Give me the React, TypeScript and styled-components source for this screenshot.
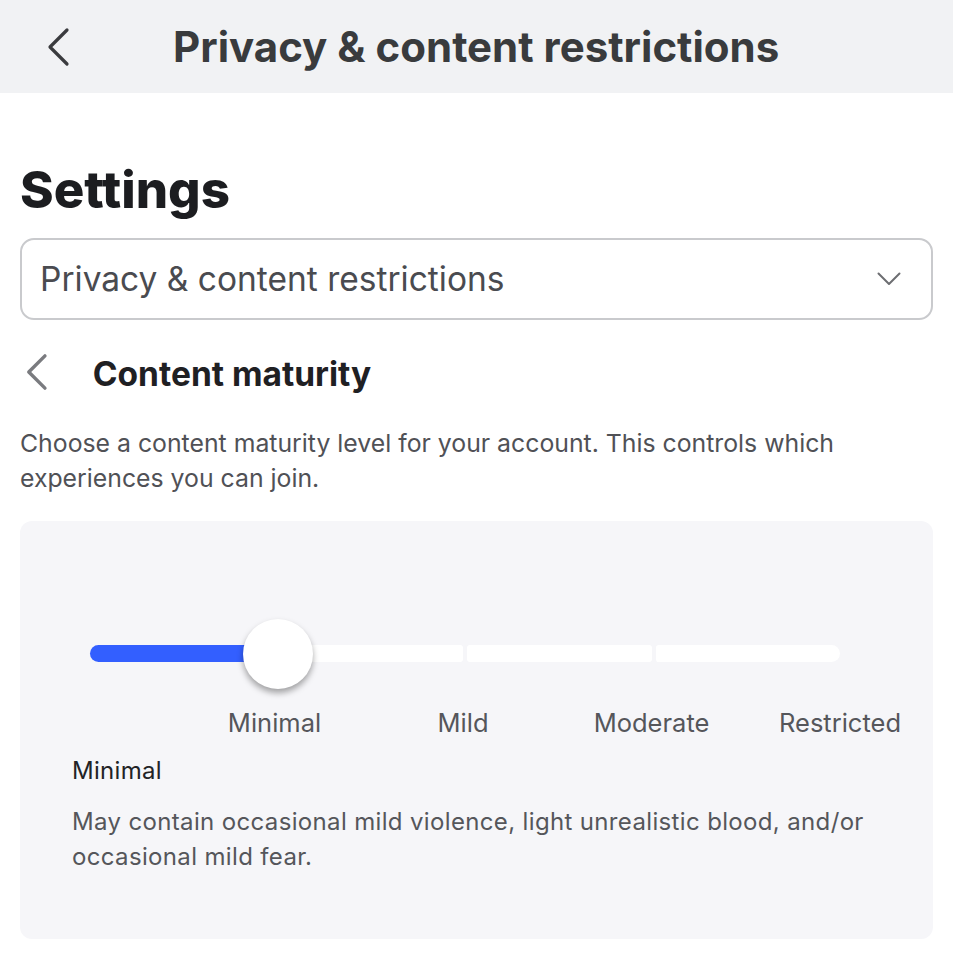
import React from 'react';
import styled, { createGlobalStyle } from 'styled-components';

const Global = createGlobalStyle`
  body {
    margin: 0;
    background: #ffffff;
    font-family: Inter, "Open Sans", sans-serif;
  }
`;

const Header = styled.header`
  height: 93px;
  background: #f1f2f4;
  display: flex;
  align-items: center;
  padding-left: 46px;
  box-sizing: border-box;
`;

const HeaderTitle = styled.h1`
  margin: 0 0 0 103px;
  font-size: 42px;
  font-weight: 700;
  color: #393b3d;
`;

const Page = styled.main`
  padding: 66px 20px 20px;
`;

const Title = styled.h2`
  margin: 0 0 17px;
  font-size: 51px;
  font-weight: 800;
  color: #1c1d20;
  line-height: 62px;
`;

const Select = styled.div`
  height: 82px;
  border: 2px solid #c9cacd;
  border-radius: 14px;
  box-sizing: border-box;
  display: flex;
  align-items: center;
  justify-content: space-between;
  padding: 0 30px 0 18px;
  font-size: 33.5px;
  color: #4a4b50;
`;

const SectionRow = styled.div`
  display: flex;
  align-items: center;
  height: 70px;
  margin-top: 19px;
`;

const SectionTitle = styled.h3`
  margin: 0 0 0 45px;
  font-size: 33.5px;
  font-weight: 700;
  color: #1f2023;
`;

const Description = styled.p`
  margin: 17px 0 25px;
  font-size: 24.8px;
  line-height: 35px;
  color: #505156;
  max-width: 860px;
`;

const Card = styled.section`
  background: #f6f6f9;
  border-radius: 12px;
  padding: 124px 0 62px 52px;
  height: 418px;
  box-sizing: border-box;
`;

const TrackWrap = styled.div`
  position: relative;
  margin-left: 18px;
  width: 750px;
  display: flex;
  gap: 4px;
`;

const Segment = styled.div<{ $filled?: boolean; $pos: 'first' | 'mid' | 'last' }>`
  flex: 1;
  height: 17px;
  background: ${(p) => (p.$filled ? '#335fff' : '#ffffff')};
  border-radius: ${(p) =>
    p.$pos === 'first' ? '9px 3px 3px 9px' : p.$pos === 'last' ? '3px 9px 9px 3px' : '3px'};
`;

const Thumb = styled.div`
  position: absolute;
  top: 50%;
  width: 70px;
  height: 70px;
  border-radius: 50%;
  background: #ffffff;
  transform: translate(-50%, -50%);
  box-shadow: 0 4px 6px rgba(0, 0, 0, 0.35);
`;

const Labels = styled.div`
  margin-left: 18px;
  width: 750px;
  display: flex;
  gap: 4px;
  margin-top: 45px;
`;

const LabelCell = styled.div`
  flex: 1;
  display: flex;
  justify-content: flex-end;
`;

const Label = styled.span`
  font-size: 25.5px;
  color: #55565b;
  transform: translateX(50%);
  white-space: nowrap;
`;

const LevelName = styled.div`
  margin-top: 18px;
  font-size: 24px;
  letter-spacing: 0.3px;
  color: #222326;
`;

const LevelText = styled.p`
  margin: 19px 0 0;
  font-size: 24px;
  letter-spacing: 0.35px;
  line-height: 35px;
  color: #55565b;
  max-width: 840px;
`;

const Chevron = ({ size, color, width }: { size: number; color: string; width: number }) => (
  <svg width={size * 0.6} height={size} viewBox="0 0 12 20" fill="none">
    <path d="M10.5 1.5 2 10l8.5 8.5" stroke={color} strokeWidth={width} strokeLinecap="round" strokeLinejoin="round" />
  </svg>
);

const levels = ['Minimal', 'Mild', 'Moderate', 'Restricted'];

export default function App() {
  const selected = 0;
  return (
    <>
      <Global />
      <Header>
        <Chevron size={40} color="#3a3b3e" width={1.6} />
        <HeaderTitle>Privacy &amp; content restrictions</HeaderTitle>
      </Header>
      <Page>
        <Title>Settings</Title>
        <Select>
          <span>Privacy &amp; content restrictions</span>
          <svg width="24" height="14" viewBox="0 0 24 14" fill="none">
            <path d="M1.5 1.5 12 12 22.5 1.5" stroke="#6d6e72" strokeWidth="2" strokeLinecap="round" strokeLinejoin="round" />
          </svg>
        </Select>
        <SectionRow>
          <span style={{ marginLeft: 5 }}>
            <Chevron size={38} color="#7a7b7f" width={1.8} />
          </span>
          <SectionTitle>Content maturity</SectionTitle>
        </SectionRow>
        <Description>
          Choose a content maturity level for your account. This controls which experiences you can join.
        </Description>
        <Card>
          <TrackWrap>
            {levels.map((l, i) => (
              <Segment
                key={l}
                $filled={i <= selected}
                $pos={i === 0 ? 'first' : i === levels.length - 1 ? 'last' : 'mid'}
              />
            ))}
            <Thumb style={{ left: `${((selected + 1) / levels.length) * 100}%` }} />
          </TrackWrap>
          <Labels>
            {levels.map((l) => (
              <LabelCell key={l}>
                <Label>{l}</Label>
              </LabelCell>
            ))}
          </Labels>
          <LevelName>Minimal</LevelName>
          <LevelText>May contain occasional mild violence, light unrealistic blood, and/or occasional mild fear.</LevelText>
        </Card>
      </Page>
    </>
  );
}
